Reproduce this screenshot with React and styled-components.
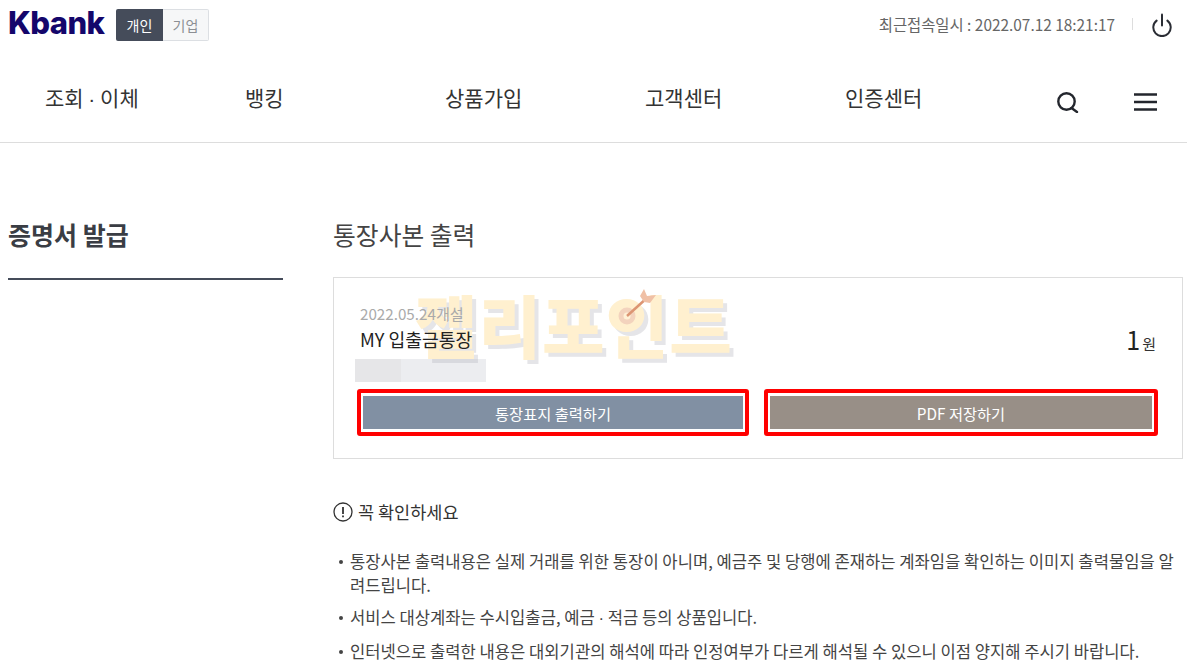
import React from 'react';
import styled, { createGlobalStyle } from 'styled-components';

const GlobalStyle = createGlobalStyle`
  html, body { margin: 0; padding: 0; background: #fff; overflow: hidden; }
  body { font-family: "Noto Sans CJK KR", "Noto Sans", sans-serif; color: #333; }
  * { box-sizing: border-box; }
`;

const Page = styled.div`
  width: 1187px;
  height: 664px;
  overflow: hidden;
`;

const Header = styled.header`
  height: 143px;
  border-bottom: 1px solid #ddd;
`;

const TopBar = styled.div`
  height: 50px;
  padding: 9px 13px 0 8px;
  display: flex;
  align-items: flex-start;
`;

const Logo = styled.div`
  font-family: "Inter", sans-serif;
  font-weight: 800;
  font-size: 31px;
  line-height: 28px;
  letter-spacing: -0.6px;
  color: #14066b;
  width: 108px;
`;

const Toggle = styled.div`
  display: flex;
  height: 32px;
`;

const ToggleBtn = styled.div`
  width: ${(p) => (p.$on ? '47px' : '46px')};
  display: flex;
  align-items: center;
  justify-content: center;
  font-size: 14px;
  border-radius: ${(p) => (p.$on ? '2px 0 0 2px' : '0 2px 2px 0')};
  background: ${(p) => (p.$on ? '#454c5a' : '#f6f7f8')};
  color: ${(p) => (p.$on ? '#fff' : '#8c8f94')};
  border: ${(p) => (p.$on ? 'none' : '1px solid #dcdfe3')};
  border-left: none;
`;

const TopRight = styled.div`
  margin-left: auto;
  display: flex;
  align-items: center;
  height: 30px;
`;

const LastLogin = styled.span`
  font-size: 15.4px;
  color: #666;
`;

const Divider = styled.span`
  width: 1px;
  height: 12px;
  background: #ddd;
  margin: 0 17px;
`;

const IconBox = styled.span`
  display: flex;
  margin-top: 2px;
`;

const NavBar = styled.nav`
  height: 92px;
  padding: 0 30px 0 45px;
  display: flex;
  align-items: center;
`;

const NavItem = styled.div`
  width: 200px;
  font-size: 21px;
  color: #333;
  position: relative;
  top: 1px;
`;

const Dot = styled.span`
  font-family: "Liberation Sans", sans-serif;
`;

const NavIcons = styled.div`
  margin-left: auto;
  display: flex;
  align-items: center;
  gap: 55px;
  margin-top: 12px;
`;

const Content = styled.main`
  display: flex;
  padding: 0 4px 0 8px;
`;

const Side = styled.aside`
  flex: none;
  width: 275px;
  margin-right: 50px;
  padding-top: 73px;
`;

const SideTitle = styled.h2`
  margin: 0;
  height: 64px;
  font-size: 25px;
  line-height: 36px;
  font-weight: 700;
  color: #3a3d44;
  border-bottom: 2px solid #454c5a;
`;

const Main = styled.section`
  flex: 1;
  min-width: 0;
  padding-top: 73px;
`;

const PageTitle = styled.h3`
  margin: 0 0 23px;
  font-size: 24.8px;
  line-height: 36px;
  height: 38px;
  font-weight: 400;
  color: #444;
`;

const Card = styled.div`
  position: relative;
  height: 182px;
  border: 1px solid #ddd;
  padding: 25px 26px 0;
`;

const Opened = styled.div`
  position: relative;
  font-size: 15.2px;
  line-height: 20px;
  color: #aaa;
`;

const AccountRow = styled.div`
  position: relative;
  display: flex;
  justify-content: space-between;
  align-items: center;
  height: 32px;
`;

const AccountName = styled.div`
  font-size: 18.2px;
  color: #222;
`;

const Amount = styled.div`
  font-size: 15px;
  color: #333;
  b {
    font-weight: 400;
    font-size: 25px;
    margin-right: 2px;
    color: #222;
  }
`;

const Masked = styled.div`
  width: 131px;
  height: 23px;
  margin: 4px 0 7px -5px;
  background: linear-gradient(90deg, #e6e6e8 0 35%, #ecedf0 35% 100%);
`;

const Buttons = styled.div`
  position: relative;
  display: flex;
  gap: 15px;
  margin-left: -3px;
`;

const Highlight = styled.div`
  flex: none;
  width: ${(p) => p.$w}px;
  height: 47px;
  border: 4px solid #f00;
  border-radius: 3px;
  padding: 3px 2px;
  display: flex;
`;

const ActionBtn = styled.button`
  flex: 1;
  border: none;
  padding: 0;
  font-family: inherit;
  font-size: 15.3px;
  color: #fff;
  background: ${(p) => p.$bg};
`;

const Watermark = styled.div`
  position: absolute;
  left: 81px;
  top: 3px;
  font-size: 68px;
  line-height: 86px;
  font-weight: 900;
  letter-spacing: 1px;
  color: #fff0cf;
  text-shadow: 4px 4px 0 rgba(180, 180, 190, 0.35);
  white-space: nowrap;
  pointer-events: none;
`;

const Dart = styled.svg`
  position: absolute;
  left: 283px;
  top: 10px;
  pointer-events: none;
`;

const Notice = styled.div`
  margin-top: 41px;
`;

const NoticeTitle = styled.div`
  display: flex;
  align-items: center;
  gap: 5px;
  font-size: 17.5px;
  line-height: 24px;
  color: #333;
  margin-bottom: 25px;
`;

const NoticeList = styled.ul`
  list-style: none;
  margin: 0;
  padding: 0;
`;

const NoticeItem = styled.li`
  position: relative;
  padding-left: 17px;
  font-size: 16.6px;
  line-height: 24px;
  margin-bottom: 8px;
  color: #444;
  &::before {
    content: '';
    position: absolute;
    left: 6px;
    top: 11px;
    width: 4px;
    height: 4px;
    border-radius: 50%;
    background: #444;
  }
`;

export default function App() {
  return (
    <Page>
      <GlobalStyle />
      <Header>
        <TopBar>
          <Logo>Kbank</Logo>
          <Toggle>
            <ToggleBtn $on>개인</ToggleBtn>
            <ToggleBtn>기업</ToggleBtn>
          </Toggle>
          <TopRight>
            <LastLogin>최근접속일시 : 2022.07.12 18:21:17</LastLogin>
            <Divider />
            <IconBox>
              <svg width="24" height="24" viewBox="0 0 24 24" fill="none" stroke="#2a2d34" strokeWidth="2" strokeLinecap="round">
                <path d="M12 1.5v11" />
                <path d="M6.6 7.6a8.7 8.7 0 1 0 10.8 0" />
              </svg>
            </IconBox>
          </TopRight>
        </TopBar>
        <NavBar>
          <NavItem>조회 <Dot>·</Dot> 이체</NavItem>
          <NavItem>뱅킹</NavItem>
          <NavItem>상품가입</NavItem>
          <NavItem>고객센터</NavItem>
          <NavItem>인증센터</NavItem>
          <NavIcons>
            <svg width="23" height="21" viewBox="0 0 23 21" fill="none" stroke="#23262d" strokeWidth="2.4">
              <circle cx="10.5" cy="9.5" r="8.2" />
              <path d="M15.5 16l5.5 4" strokeLinecap="round" />
            </svg>
            <svg width="23" height="18" viewBox="0 0 23 18" fill="none" stroke="#23262d" strokeWidth="2.6">
              <path d="M0 1.5h23M0 9h23M0 16.5h23" />
            </svg>
          </NavIcons>
        </NavBar>
      </Header>
      <Content>
        <Side>
          <SideTitle>증명서 발급</SideTitle>
        </Side>
        <Main>
          <PageTitle>통장사본 출력</PageTitle>
          <Card>
            <Watermark>젤리포인트</Watermark>
            <Dart width="42" height="40" viewBox="0 0 42 40" fill="none">
              <circle cx="10" cy="28" r="8.5" fill="#f3d3bd" />
              <circle cx="10" cy="28" r="3.5" fill="#fff1d6" />
              <path d="M10 28L31 9" stroke="#dc9573" strokeWidth="2.5" />
              <path d="M27 1l3 7 9-1-6 8-6-1-4-6z" fill="#f0c0a6" />
            </Dart>
            <Opened>2022.05.24개설</Opened>
            <AccountRow>
              <AccountName>MY 입출금통장</AccountName>
              <Amount><b>1</b>원</Amount>
            </AccountRow>
            <Masked />
            <Buttons>
              <Highlight $w={392}><ActionBtn $bg="#8190a3">통장표지 출력하기</ActionBtn></Highlight>
              <Highlight $w={394}><ActionBtn $bg="#988f87">PDF 저장하기</ActionBtn></Highlight>
            </Buttons>
          </Card>
          <Notice>
            <NoticeTitle>
              <svg width="20" height="20" viewBox="0 0 20 20" fill="none" stroke="#333">
                <circle cx="10" cy="10" r="9" strokeWidth="1.3" />
                <path d="M10 5v7" strokeWidth="1.8" />
                <path d="M10 13.4v1.8" strokeWidth="1.8" />
              </svg>
              꼭 확인하세요
            </NoticeTitle>
            <NoticeList>
              <NoticeItem>통장사본 출력내용은 실제 거래를 위한 통장이 아니며, 예금주 및 당행에 존재하는 계좌임을 확인하는 이미지 출력물임을 알려드립니다.</NoticeItem>
              <NoticeItem>서비스 대상계좌는 수시입출금, 예금 <Dot>·</Dot> 적금 등의 상품입니다.</NoticeItem>
              <NoticeItem>인터넷으로 출력한 내용은 대외기관의 해석에 따라 인정여부가 다르게 해석될 수 있으니 이점 양지해 주시기 바랍니다.</NoticeItem>
            </NoticeList>
          </Notice>
        </Main>
      </Content>
    </Page>
  );
}
